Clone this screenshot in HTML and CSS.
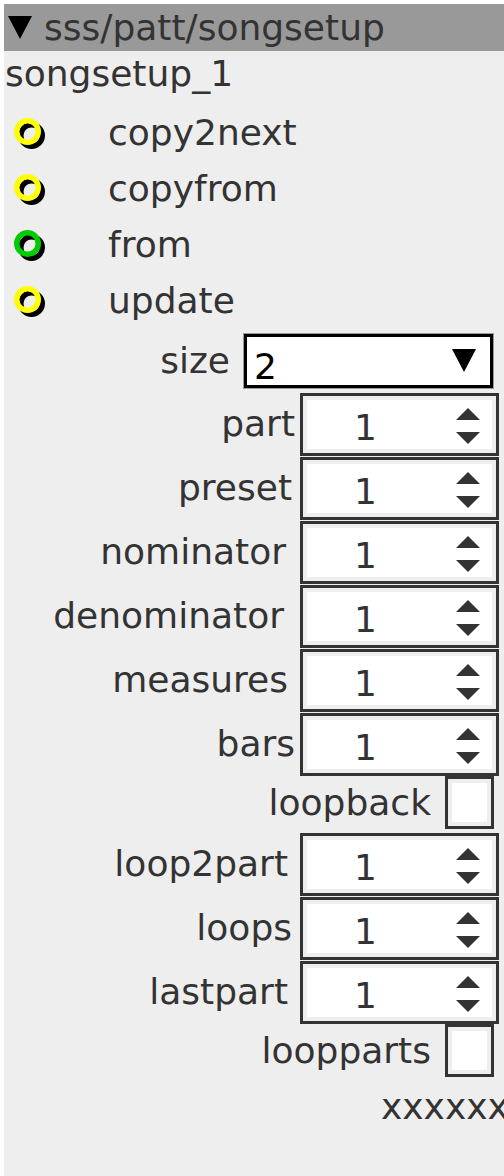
FILE: index.html
```html
<!DOCTYPE html>
<html lang="en">
<head>
    <meta charset="UTF-8">
    <meta name="viewport" content="width=device-width, initial-scale=1.0">
    <title>songsetup</title>
    <link rel="stylesheet" href="styles.css">
</head>
<body>
    <div class="panel">
        <div class="panel-head">
            <svg class="caret" width="24" height="23" viewBox="0 0 24 23"><polygon points="0,0 24,0 12,23" fill="#000"/></svg>
            <span class="panel-title">sss/patt/songsetup</span>
        </div>
        <div class="node-name">songsetup_1</div>

        <!-- triggers -->
        <div class="trigger">
            <svg class="led" width="31" height="31" viewBox="0 0 31 31"><circle cx="17.5" cy="17.5" r="10.75" fill="none" stroke="#000" stroke-width="5.5"/><circle cx="13.5" cy="13.5" r="10.75" fill="none" stroke="#ffff00" stroke-width="5.5"/></svg>
            <span>copy2next</span>
        </div>
        <div class="trigger">
            <svg class="led" width="31" height="31" viewBox="0 0 31 31"><circle cx="17.5" cy="17.5" r="10.75" fill="none" stroke="#000" stroke-width="5.5"/><circle cx="13.5" cy="13.5" r="10.75" fill="none" stroke="#ffff00" stroke-width="5.5"/></svg>
            <span>copyfrom</span>
        </div>
        <div class="trigger">
            <svg class="led" width="31" height="31" viewBox="0 0 31 31"><circle cx="17.5" cy="17.5" r="10.75" fill="none" stroke="#000" stroke-width="5.5"/><circle cx="13.5" cy="13.5" r="10.75" fill="none" stroke="#00cc00" stroke-width="5.5"/></svg>
            <span>from</span>
        </div>
        <div class="trigger">
            <svg class="led" width="31" height="31" viewBox="0 0 31 31"><circle cx="17.5" cy="17.5" r="10.75" fill="none" stroke="#000" stroke-width="5.5"/><circle cx="13.5" cy="13.5" r="10.75" fill="none" stroke="#ffff00" stroke-width="5.5"/></svg>
            <span>update</span>
        </div>

        <!-- fields -->
        <div class="field field-select">
            <label class="lbl-d">size</label>
            <div class="select">
                <span class="select-value">2</span>
                <svg width="24" height="23" viewBox="0 0 24 23"><polygon points="0,0 24,0 12,23" fill="#000"/></svg>
            </div>
        </div>
        <div class="field">
            <label class="lbl-a">part</label>
            <div class="spin"><span class="spin-value">1</span><svg class="spin-arrows" width="24" height="36" viewBox="0 0 24 36"><polygon points="12,0 24,12 0,12"/><polygon points="0,24 24,24 12,36"/></svg></div>
        </div>
        <div class="field">
            <label class="lbl-b">preset</label>
            <div class="spin"><span class="spin-value">1</span><svg class="spin-arrows" width="24" height="36" viewBox="0 0 24 36"><polygon points="12,0 24,12 0,12"/><polygon points="0,24 24,24 12,36"/></svg></div>
        </div>
        <div class="field">
            <label class="lbl-d">nominator</label>
            <div class="spin"><span class="spin-value">1</span><svg class="spin-arrows" width="24" height="36" viewBox="0 0 24 36"><polygon points="12,0 24,12 0,12"/><polygon points="0,24 24,24 12,36"/></svg></div>
        </div>
        <div class="field">
            <label class="lbl-e">denominator</label>
            <div class="spin"><span class="spin-value">1</span><svg class="spin-arrows" width="24" height="36" viewBox="0 0 24 36"><polygon points="12,0 24,12 0,12"/><polygon points="0,24 24,24 12,36"/></svg></div>
        </div>
        <div class="field">
            <label class="lbl-c">measures</label>
            <div class="spin"><span class="spin-value">1</span><svg class="spin-arrows" width="24" height="36" viewBox="0 0 24 36"><polygon points="12,0 24,12 0,12"/><polygon points="0,24 24,24 12,36"/></svg></div>
        </div>
        <div class="field">
            <label class="lbl-a">bars</label>
            <div class="spin"><span class="spin-value">1</span><svg class="spin-arrows" width="24" height="36" viewBox="0 0 24 36"><polygon points="12,0 24,12 0,12"/><polygon points="0,24 24,24 12,36"/></svg></div>
        </div>
        <div class="field field-check">
            <label class="lbl-d">loopback</label>
            <div class="check"></div>
        </div>
        <div class="field">
            <label class="lbl-c">loop2part</label>
            <div class="spin"><span class="spin-value">1</span><svg class="spin-arrows" width="24" height="36" viewBox="0 0 24 36"><polygon points="12,0 24,12 0,12"/><polygon points="0,24 24,24 12,36"/></svg></div>
        </div>
        <div class="field">
            <label class="lbl-b">loops</label>
            <div class="spin"><span class="spin-value">1</span><svg class="spin-arrows" width="24" height="36" viewBox="0 0 24 36"><polygon points="12,0 24,12 0,12"/><polygon points="0,24 24,24 12,36"/></svg></div>
        </div>
        <div class="field">
            <label class="lbl-c">lastpart</label>
            <div class="spin"><span class="spin-value">1</span><svg class="spin-arrows" width="24" height="36" viewBox="0 0 24 36"><polygon points="12,0 24,12 0,12"/><polygon points="0,24 24,24 12,36"/></svg></div>
        </div>
        <div class="field field-check">
            <label class="lbl-d">loopparts</label>
            <div class="check"></div>
        </div>
        <div class="note">xxxxxx</div>
    </div>
</body>
</html>
```

FILE: styles.css
```css
body {
    margin: 0;
    background-color: #fff;
    overflow: hidden;
}
.panel {
    margin: 4px 0 0 4px;
    width: 500px;
    min-height: 1172px;
    background-color: #eee;
    font-family: "DejaVu Sans", sans-serif;
    font-size: 36px;
    line-height: 42px;
    color: #333;
}
.panel-head {
    display: flex;
    align-items: center;
    gap: 12px;
    height: 47px;
    padding-left: 4px;
    background-color: #999;
}
.node-name {
    height: 54px;
    padding: 2px 0 0 1px;
    box-sizing: border-box;
}
.trigger {
    display: flex;
    align-items: center;
    height: 56px;
    padding-left: 10px;
}
.led {
    margin-right: 63px;
}
.field {
    display: flex;
    justify-content: flex-end;
    align-items: center;
    height: 64px;
    padding-right: 5px;
}
.field-select {
    height: 63px;
    padding-right: 11px;
}
.field-check {
    height: 56px;
    align-items: flex-start;
    padding-right: 10px;
}
.field-check label {
    padding-top: 6px;
}
.lbl-a { margin-right: 5px; }
.lbl-b { margin-right: 8px; }
.lbl-c { margin-right: 12px; }
.lbl-d { margin-right: 14px; }
.lbl-e { margin-right: 16px; }
.select {
    display: flex;
    justify-content: space-between;
    align-items: center;
    width: 249px;
    height: 54px;
    box-sizing: border-box;
    border: 3px solid #000;
    box-shadow: 0 0 0 1px #999;
    background-color: #fff;
    padding: 0 14px 0 7px;
    color: #000;
}
.select-value {
    padding-top: 12px;
}
.spin {
    display: flex;
    align-items: center;
    justify-content: space-between;
    width: 199px;
    height: 63px;
    box-sizing: border-box;
    border: 3px solid #333;
    box-shadow: inset 0 0 0 4px #eee;
    background-color: #fff;
    padding: 0 16px 0 51px;
}
.spin-value {
    padding-top: 8px;
}
.spin-arrows {
    fill: #333;
    margin-top: 4px;
}
.check {
    width: 49px;
    height: 53px;
    box-sizing: border-box;
    border: 3px solid #333;
    box-shadow: inset 0 0 0 4px #eee;
    background-color: #fff;
}
.note {
    padding: 6px 0 0 377px;
    white-space: nowrap;
}
```
